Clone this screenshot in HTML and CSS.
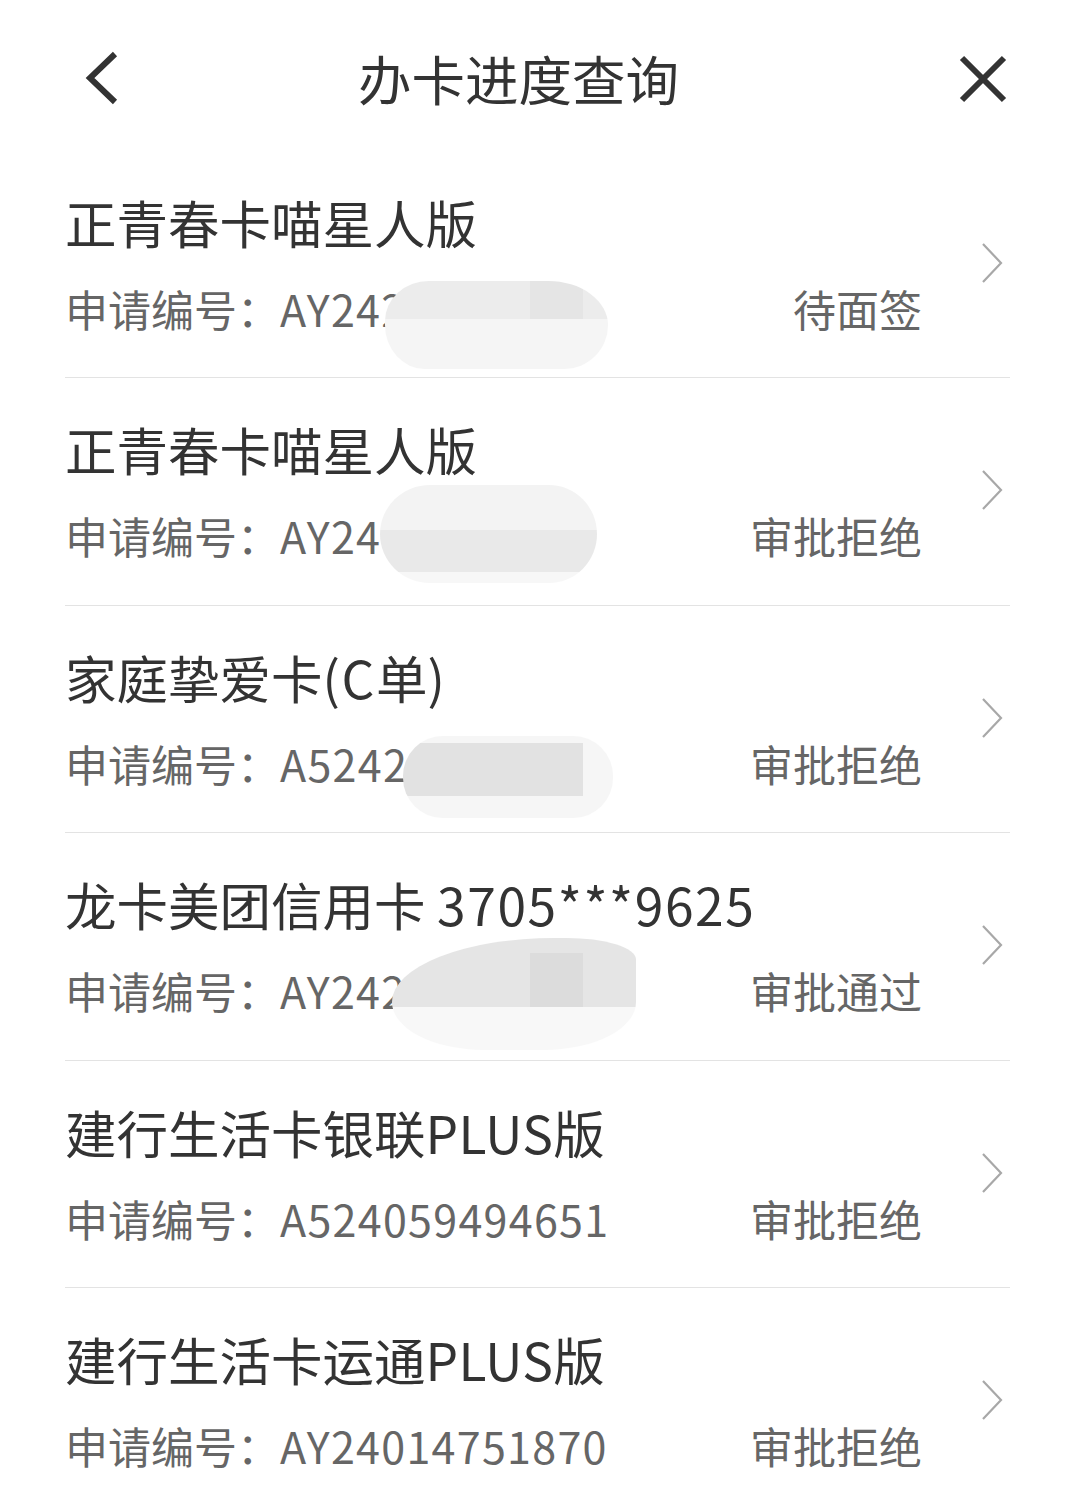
FILE: index.html
```html
<!DOCTYPE html>
<html lang="zh-CN">
<head>
<meta charset="utf-8">
<title>办卡进度查询</title>
<link rel="stylesheet" href="styles.css">
</head>
<body>
<header class="topbar">
  <svg class="back" viewBox="0 0 40 56" width="40" height="56"><polyline points="31,4 6,28 31,52" fill="none" stroke="#333" stroke-width="6" stroke-linecap="butt" stroke-linejoin="miter"/></svg>
  <h1 class="title">办卡进度查询</h1>
  <svg class="close" viewBox="0 0 50 50" width="50" height="50"><path d="M4 4 L46 46 M46 4 L4 46" fill="none" stroke="#333" stroke-width="6"/></svg>
</header>
<main class="list">
  <div class="row">
    <div class="info">
      <div class="name">正青春卡喵星人版</div>
      <div class="meta"><span>申请编号：<span class="num">AY242</span></span><span>待面签</span></div>
    </div>
    <svg class="arrow" viewBox="0 0 24 44" width="24" height="44"><polyline points="3,3 21,22 3,41" fill="none" stroke="#a8a8a8" stroke-width="2.2"/></svg>
    <div class="blob blob1"></div>
  </div>
  <div class="row">
    <div class="info">
      <div class="name">正青春卡喵星人版</div>
      <div class="meta"><span>申请编号：<span class="num">AY24</span></span><span>审批拒绝</span></div>
    </div>
    <svg class="arrow" viewBox="0 0 24 44" width="24" height="44"><polyline points="3,3 21,22 3,41" fill="none" stroke="#a8a8a8" stroke-width="2.2"/></svg>
    <div class="blob blob2"></div>
  </div>
  <div class="row">
    <div class="info">
      <div class="name">家庭挚爱卡<span class="tnum">(C</span>单)</div>
      <div class="meta"><span>申请编号：<span class="num">A5242</span></span><span>审批拒绝</span></div>
    </div>
    <svg class="arrow" viewBox="0 0 24 44" width="24" height="44"><polyline points="3,3 21,22 3,41" fill="none" stroke="#a8a8a8" stroke-width="2.2"/></svg>
    <div class="blob blob3"></div>
  </div>
  <div class="row">
    <div class="info">
      <div class="name">龙卡美团信用卡 <span class="tnum">3705***9625</span></div>
      <div class="meta"><span>申请编号：<span class="num">AY242</span></span><span>审批通过</span></div>
    </div>
    <svg class="arrow" viewBox="0 0 24 44" width="24" height="44"><polyline points="3,3 21,22 3,41" fill="none" stroke="#a8a8a8" stroke-width="2.2"/></svg>
    <div class="blob blob4"></div>
  </div>
  <div class="row">
    <div class="info">
      <div class="name">建行生活卡银联<span class="lat">PLUS</span>版</div>
      <div class="meta"><span>申请编号：<span class="num">A524059494651</span></span><span>审批拒绝</span></div>
    </div>
    <svg class="arrow" viewBox="0 0 24 44" width="24" height="44"><polyline points="3,3 21,22 3,41" fill="none" stroke="#a8a8a8" stroke-width="2.2"/></svg>
  </div>
  <div class="row">
    <div class="info">
      <div class="name">建行生活卡运通<span class="lat">PLUS</span>版</div>
      <div class="meta"><span>申请编号：<span class="num">AY24014751870</span></span><span>审批拒绝</span></div>
    </div>
    <svg class="arrow" viewBox="0 0 24 44" width="24" height="44"><polyline points="3,3 21,22 3,41" fill="none" stroke="#a8a8a8" stroke-width="2.2"/></svg>
  </div>
</main>
</body>
</html>
```
FILE: styles.css
```css
html, body {
  margin: 0;
  padding: 0;
  background: #ffffff;
}
body {
  font-family: "Noto Sans CJK SC", "Noto Sans", sans-serif;
  color: #333333;
  overflow: hidden;
}
.topbar {
  display: flex;
  align-items: flex-start;
  height: 150.5px;
  box-sizing: border-box;
  padding: 49px 68px 0 84px;
}
.back {
  display: block;
  flex: none;
  margin-top: 1px;
}
.title {
  margin: 0 0 0 234px;
  font-size: 53.5px;
  line-height: 58px;
  font-weight: 400;
  color: #333333;
}
.close {
  display: block;
  margin-left: auto;
  margin-top: 5px;
  flex: none;
}
.list {
  margin: 0 66px 0 65px;
}
.row {
  position: relative;
  display: flex;
  align-items: flex-start;
  height: 227.5px;
  box-sizing: border-box;
  border-bottom: 1.5px solid #e3e3e3;
}
.info {
  width: 857px;
  flex: none;
  padding-top: 41px;
}
.name {
  font-size: 51.5px;
  line-height: 60px;
  color: #333333;
  white-space: nowrap;
}
.tnum {
  letter-spacing: 1.6px;
}
.lat {
  letter-spacing: 0.4px;
}
.meta {
  display: flex;
  justify-content: space-between;
  margin-top: 31px;
  font-size: 43px;
  line-height: 50px;
  color: #666666;
  white-space: nowrap;
}
.num {
  letter-spacing: 1.3px;
}
.arrow {
  display: block;
  flex: none;
  align-self: center;
  margin-left: 58px;
  margin-top: -2px;
}
.blob {
  position: absolute;
}
.blob1 {
  left: 320px;
  top: 130px;
  width: 223px;
  height: 88px;
  border-radius: 44px 60px 44px 40px / 40px 44px 44px 44px;
  background:
    linear-gradient(#e5e5e5, #e5e5e5) 145px 0 / 53px 38px no-repeat,
    linear-gradient(to bottom, #ececec 0 38px, #f5f5f5 38px);
}
.blob2 {
  left: 315px;
  top: 107px;
  width: 217px;
  height: 98px;
  border-radius: 50px 48px 48px 50px / 49px 49px 49px 49px;
  background: linear-gradient(to bottom, #f3f3f3 0 45px, #e9e9e9 45px 87px, #f7f7f7 87px);
}
.blob3 {
  left: 338px;
  top: 130px;
  width: 210px;
  height: 82px;
  border-radius: 40px;
  background:
    linear-gradient(#e2e2e2, #e2e2e2) 0 7px / 180px 53px no-repeat,
    #f6f6f6;
}
.blob4 {
  left: 327px;
  top: 105px;
  width: 244px;
  height: 112px;
  border-radius: 70% 30% 40% 40% / 60% 20% 45% 45%;
  background:
    linear-gradient(#dcdcdc, #dcdcdc) 138px 15px / 53px 54px no-repeat,
    linear-gradient(to bottom, #e5e5e5 0 69px, #f8f8f8 69px);
}
```
